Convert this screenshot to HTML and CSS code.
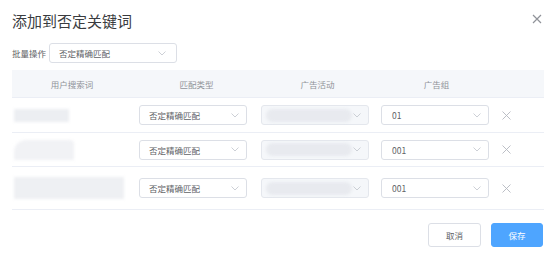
FILE: index.html
```html
<!DOCTYPE html>
<html lang="zh">
<head>
<meta charset="utf-8">
<link rel="stylesheet" href="styles.css">
</head>
<body>
<div class="dialog">
  <div class="head">
    <div class="title">添加到否定关键词</div>
    <svg class="close" width="10" height="10" viewBox="0 0 10 10"><path d="M1 1L9 9M9 1L1 9" stroke="#909399" stroke-width="1.2"/></svg>
  </div>
  <div class="batch">
    <span class="label">批量操作</span>
    <div class="sel batch-sel"><span>否定精确匹配</span><svg class="arrow" width="8" height="5" viewBox="0 0 8 5"><path d="M0.5 0.5L4 4L7.5 0.5" fill="none" stroke="#c0c4cc" stroke-width="0.8"/></svg></div>
  </div>
  <div class="table">
    <div class="row header">
      <div class="cell c1">用户搜索词</div>
      <div class="cell c2">匹配类型</div>
      <div class="cell c3">广告活动</div>
      <div class="cell c4">广告组</div>
      <div class="cell c5"></div>
    </div>
    <div class="row r1">
      <div class="cell c1"><div class="blur b1"></div></div>
      <div class="cell c2"><div class="sel"><span>否定精确匹配</span><svg class="arrow" width="8" height="5" viewBox="0 0 8 5"><path d="M0.5 0.5L4 4L7.5 0.5" fill="none" stroke="#c0c4cc" stroke-width="0.8"/></svg></div></div>
      <div class="cell c3"><div class="sel dis"><div class="blur bs"></div><svg class="arrow" width="8" height="5" viewBox="0 0 8 5"><path d="M0.5 0.5L4 4L7.5 0.5" fill="none" stroke="#c0c4cc" stroke-width="0.8"/></svg></div></div>
      <div class="cell c4"><div class="sel"><span>01</span><svg class="arrow" width="8" height="5" viewBox="0 0 8 5"><path d="M0.5 0.5L4 4L7.5 0.5" fill="none" stroke="#c0c4cc" stroke-width="0.8"/></svg></div></div>
      <div class="cell c5"><svg width="9" height="9" viewBox="0 0 9 9"><path d="M0.5 0.5L8.5 8.5M8.5 0.5L0.5 8.5" stroke="#b4b8bf" stroke-width="0.9"/></svg></div>
    </div>
    <div class="row r2">
      <div class="cell c1"><div class="blur b2"></div></div>
      <div class="cell c2"><div class="sel"><span>否定精确匹配</span><svg class="arrow" width="8" height="5" viewBox="0 0 8 5"><path d="M0.5 0.5L4 4L7.5 0.5" fill="none" stroke="#c0c4cc" stroke-width="0.8"/></svg></div></div>
      <div class="cell c3"><div class="sel dis"><div class="blur bs"></div><svg class="arrow" width="8" height="5" viewBox="0 0 8 5"><path d="M0.5 0.5L4 4L7.5 0.5" fill="none" stroke="#c0c4cc" stroke-width="0.8"/></svg></div></div>
      <div class="cell c4"><div class="sel"><span>001</span><svg class="arrow" width="8" height="5" viewBox="0 0 8 5"><path d="M0.5 0.5L4 4L7.5 0.5" fill="none" stroke="#c0c4cc" stroke-width="0.8"/></svg></div></div>
      <div class="cell c5"><svg width="9" height="9" viewBox="0 0 9 9"><path d="M0.5 0.5L8.5 8.5M8.5 0.5L0.5 8.5" stroke="#b4b8bf" stroke-width="0.9"/></svg></div>
    </div>
    <div class="row r3">
      <div class="cell c1"><div class="blur b3"></div></div>
      <div class="cell c2"><div class="sel"><span>否定精确匹配</span><svg class="arrow" width="8" height="5" viewBox="0 0 8 5"><path d="M0.5 0.5L4 4L7.5 0.5" fill="none" stroke="#c0c4cc" stroke-width="0.8"/></svg></div></div>
      <div class="cell c3"><div class="sel dis"><div class="blur bs"></div><svg class="arrow" width="8" height="5" viewBox="0 0 8 5"><path d="M0.5 0.5L4 4L7.5 0.5" fill="none" stroke="#c0c4cc" stroke-width="0.8"/></svg></div></div>
      <div class="cell c4"><div class="sel"><span>001</span><svg class="arrow" width="8" height="5" viewBox="0 0 8 5"><path d="M0.5 0.5L4 4L7.5 0.5" fill="none" stroke="#c0c4cc" stroke-width="0.8"/></svg></div></div>
      <div class="cell c5"><svg width="9" height="9" viewBox="0 0 9 9"><path d="M0.5 0.5L8.5 8.5M8.5 0.5L0.5 8.5" stroke="#b4b8bf" stroke-width="0.9"/></svg></div>
    </div>
  </div>
  <div class="footer">
    <button class="btn cancel">取消</button>
    <button class="btn save">保存</button>
  </div>
</div>
</body>
</html>
```
FILE: styles.css
```css
* { box-sizing: border-box; }
body {
  margin: 0;
  background: #fff;
  font-family: "Noto Sans CJK SC", "Noto Sans", sans-serif;
  color: #606266;
}
.dialog {
  width: 554px;
  height: 258px;
  padding: 10px 10px 0 12px;
}
.head {
  display: flex;
  align-items: center;
  justify-content: space-between;
  height: 22px;
}
.title {
  font-size: 15px;
  color: #3a3c40;
  line-height: 22px;
}
.close { margin-right: 2px; margin-top: -4px; }
.batch {
  display: flex;
  align-items: center;
  margin-top: 11px;
  height: 20px;
}
.label {
  font-size: 8.5px;
  color: #606266;
  width: 37px;
}
.sel {
  display: flex;
  align-items: center;
  justify-content: space-between;
  height: 20px;
  width: 108px;
  border: 1px solid #dcdfe6;
  border-radius: 3px;
  padding: 0 7px 0 9px;
  font-size: 8.5px;
  color: #606266;
  background: #fff;
}
.batch-sel { width: 128px; padding-right: 10px; padding-left: 9px; }
.sel.dis {
  background: #f5f7fa;
  border-color: #e4e7ed;
  padding-left: 4px;
}
.table {
  margin-top: 7px;
  width: 532px;
  border-bottom: 1px solid #ebeef5;
}
.row {
  display: grid;
  grid-template-columns: 120px 122px 120px 118px 52px;
  border-bottom: 1px solid #ebeef5;
  align-items: center;
}
.row:last-child { border-bottom: none; }
.header {
  background: #f5f7fa;
  height: 28px;
  font-size: 8.5px;
  color: #909399;
}
.r1 { height: 35px; }
.r2 { height: 34px; }
.r3 { height: 42px; }
.cell { display: flex; align-items: center; }
.header .cell { justify-content: center; }
.c2, .c3, .c4 { padding-left: 7px; }
.c4 .sel { padding-left: 10px; }
.c5 { padding-left: 10px; }
.blur {
  background: #eceef2;
  filter: blur(1.5px);
}
.b1 { width: 55px; height: 13px; margin-left: 2px; }
.b2 { width: 60px; height: 20px; margin-left: 2px; border-radius: 12px 4px 0 0; background: #f1f2f5; }
.b3 { width: 110px; height: 22px; margin-left: 2px; background: #eef0f3; }
.bs { width: 86px; height: 13px; border-radius: 7px; background: #e8eaef; }
.footer {
  display: flex;
  justify-content: flex-end;
  gap: 10px;
  margin-top: 13px;
  padding-right: 1px;
}
.btn {
  height: 24px;
  width: 53px;
  border-radius: 3px;
  font-family: "Noto Sans CJK SC", sans-serif;
  font-size: 8.5px;
  padding: 0;
}
.cancel {
  background: #fff;
  border: 1px solid #dcdfe6;
  color: #606266;
}
.save {
  background: #4ea5ff;
  border: 1px solid #4ea5ff;
  color: #fff;
  width: 52px;
}
```
